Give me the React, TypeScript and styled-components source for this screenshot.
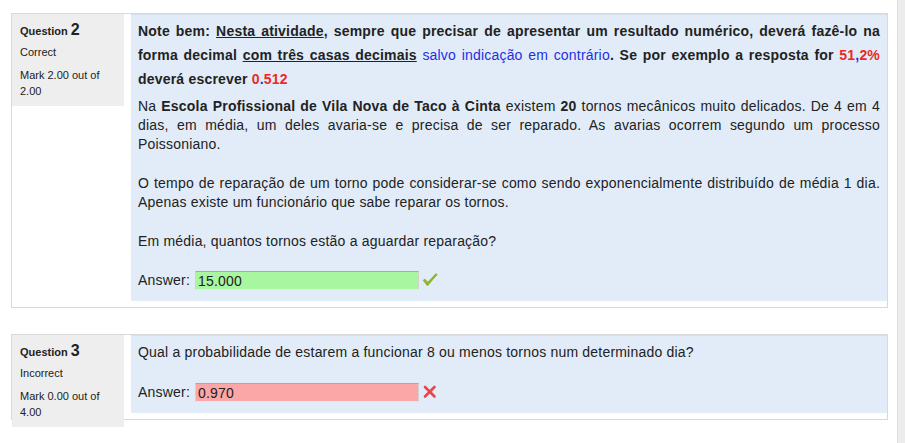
import React from "react";
import styled, { createGlobalStyle } from "styled-components";

const Global = createGlobalStyle`
  html, body { margin: 0; padding: 0; background: #ffffff; }
  body { font-family: "Liberation Sans", Arial, Helvetica, sans-serif; color: #222; }
`;

const Page = styled.div`
  display: flex;
  width: 905px;
  height: 443px;
  overflow: hidden;
  background: #fff;
`;

const Main = styled.div`
  flex: 1;
  padding: 13px 9px 0 11px;
`;

const ScrollTrack = styled.div`
  width: 7px;
  height: 100%;
  background: #ececec;
  border-left: 1px solid #dedede;
`;

const Question = styled.div`
  border: 1px solid #d9d9d9;
  background: #fff;
  margin-bottom: 26px;
`;

const Info = styled.div`
  float: left;
  width: 96px;
  padding: 6px 8px 7px 8px;
  background: #eeeeee;
  font-size: 11px;
  line-height: 16px;
  color: #222;
`;

const QNo = styled.h3`
  margin: 0 0 3px;
  font-size: 11px;
  font-weight: bold;
  line-height: 20px;
`;

const Num = styled.span`
  font-size: 16px;
`;

const State = styled.div`
  margin-bottom: 7px;
`;

const Grade = styled.div``;

const Content = styled.div`
  margin: 0 0 6px 119px;
`;

const Formulation = styled.div`
  background: #e1ecf8;
  border-top: 1px solid #d6e0ea;
  padding: 7px 7px 10px 7px;
  font-size: 14px;
  letter-spacing: 0.2px;
  line-height: 19px;
  text-align: justify;
  color: #222;
`;

const Para = styled.p<{ $lh?: number; $mb?: number; $mt?: number }>`
  margin: ${(p) => p.$mt ?? 0}px 0 ${(p) => p.$mb ?? 20}px;
  line-height: ${(p) => p.$lh ?? 19}px;
`;

const NoteBold = styled.span`
  font-weight: bold;
`;

const Blue = styled.span<{ $bold?: boolean }>`
  color: #1f2fe6;
  font-weight: ${(p) => (p.$bold ? "bold" : "normal")};
`;

const Red = styled.span`
  color: #ea2a22;
  font-weight: bold;
`;

const AnswerRow = styled.div`
  display: flex;
  align-items: center;
  gap: 5px;
  height: 22px;
`;

const Field = styled.span<{ $ok: boolean }>`
  display: inline-block;
  box-sizing: border-box;
  width: 224px;
  height: 19px;
  padding: 0 2px;
  line-height: 18px;
  font-size: 14px;
  color: #222;
  background: ${(p) => (p.$ok ? "#a9f6a1" : "#fba7a7")};
  border-top: 1px solid #a8a8a8;
  border-left: 1px solid #d2d2d2;
  border-right: 1px solid #d2d2d2;
  border-bottom: 1px solid #e8e8e8;
`;

const Mark = styled.svg`
  flex: none;
  margin-left: -3px;
`;

function Tick() {
  return (
    <Mark width="18" height="18" viewBox="0 0 18 18">
      <path d="M2.5 9.5 L6.5 14.5 L16 3.5 L15 3 L6.8 11.6 L3.8 8.4 Z" fill="#8fb52a" stroke="#8fb52a" strokeWidth="1.1" strokeLinejoin="round" />
    </Mark>
  );
}

function Cross() {
  return (
    <Mark width="18" height="18" viewBox="0 0 18 18">
      <path d="M4 4 L13.5 13.5 M13.5 4 L4 13.5" stroke="#e8464a" strokeWidth="2.6" strokeLinecap="round" />
    </Mark>
  );
}

export default function App() {
  return (
    <>
      <Global />
      <Page>
        <Main>
          <Question>
            <Info>
              <QNo>
                Question <Num>2</Num>
              </QNo>
              <State>Correct</State>
              <Grade>Mark 2.00 out of 2.00</Grade>
            </Info>
            <Content>
              <Formulation>
                <Para $lh={24} $mb={6} $mt={-3}>
                  <NoteBold>
                    Note bem: <u>Nesta atividade</u>, sempre que precisar de apresentar um resultado
                    numérico, deverá fazê-lo na forma decimal <u>com três casas decimais</u>{" "}
                    <Blue>salvo indicação em contrário</Blue>. Se por exemplo a resposta for{" "}
                    <Red>51</Red>
                    <Blue $bold>,</Blue>
                    <Red>2%</Red> deverá escrever <Red>0</Red>
                    <Blue $bold>.</Blue>
                    <Red>512</Red>
                  </NoteBold>
                </Para>
                <Para>
                  Na <b>Escola Profissional de Vila Nova de Taco à Cinta</b> existem <b>20</b> tornos
                  mecânicos muito delicados. De 4 em 4 dias, em média, um deles avaria-se e precisa de
                  ser reparado. As avarias ocorrem segundo um processo Poissoniano.
                </Para>
                <Para>
                  O tempo de reparação de um torno pode considerar-se como sendo exponencialmente
                  distribuído de média 1 dia. Apenas existe um funcionário que sabe reparar os tornos.
                </Para>
                <Para $mb={18}>Em média, quantos tornos estão a aguardar reparação?</Para>
                <AnswerRow>
                  Answer: <Field $ok>15.000</Field>
                  <Tick />
                </AnswerRow>
              </Formulation>
            </Content>
          </Question>
          <Question>
            <Info>
              <QNo>
                Question <Num>3</Num>
              </QNo>
              <State>Incorrect</State>
              <Grade>Mark 0.00 out of 4.00</Grade>
            </Info>
            <Content>
              <Formulation>
                <Para $mb={19}>
                  Qual a probabilidade de estarem a funcionar 8 ou menos tornos num determinado dia?
                </Para>
                <AnswerRow>
                  Answer: <Field $ok={false}>0.970</Field>
                  <Cross />
                </AnswerRow>
              </Formulation>
            </Content>
          </Question>
        </Main>
        <ScrollTrack />
      </Page>
    </>
  );
}
